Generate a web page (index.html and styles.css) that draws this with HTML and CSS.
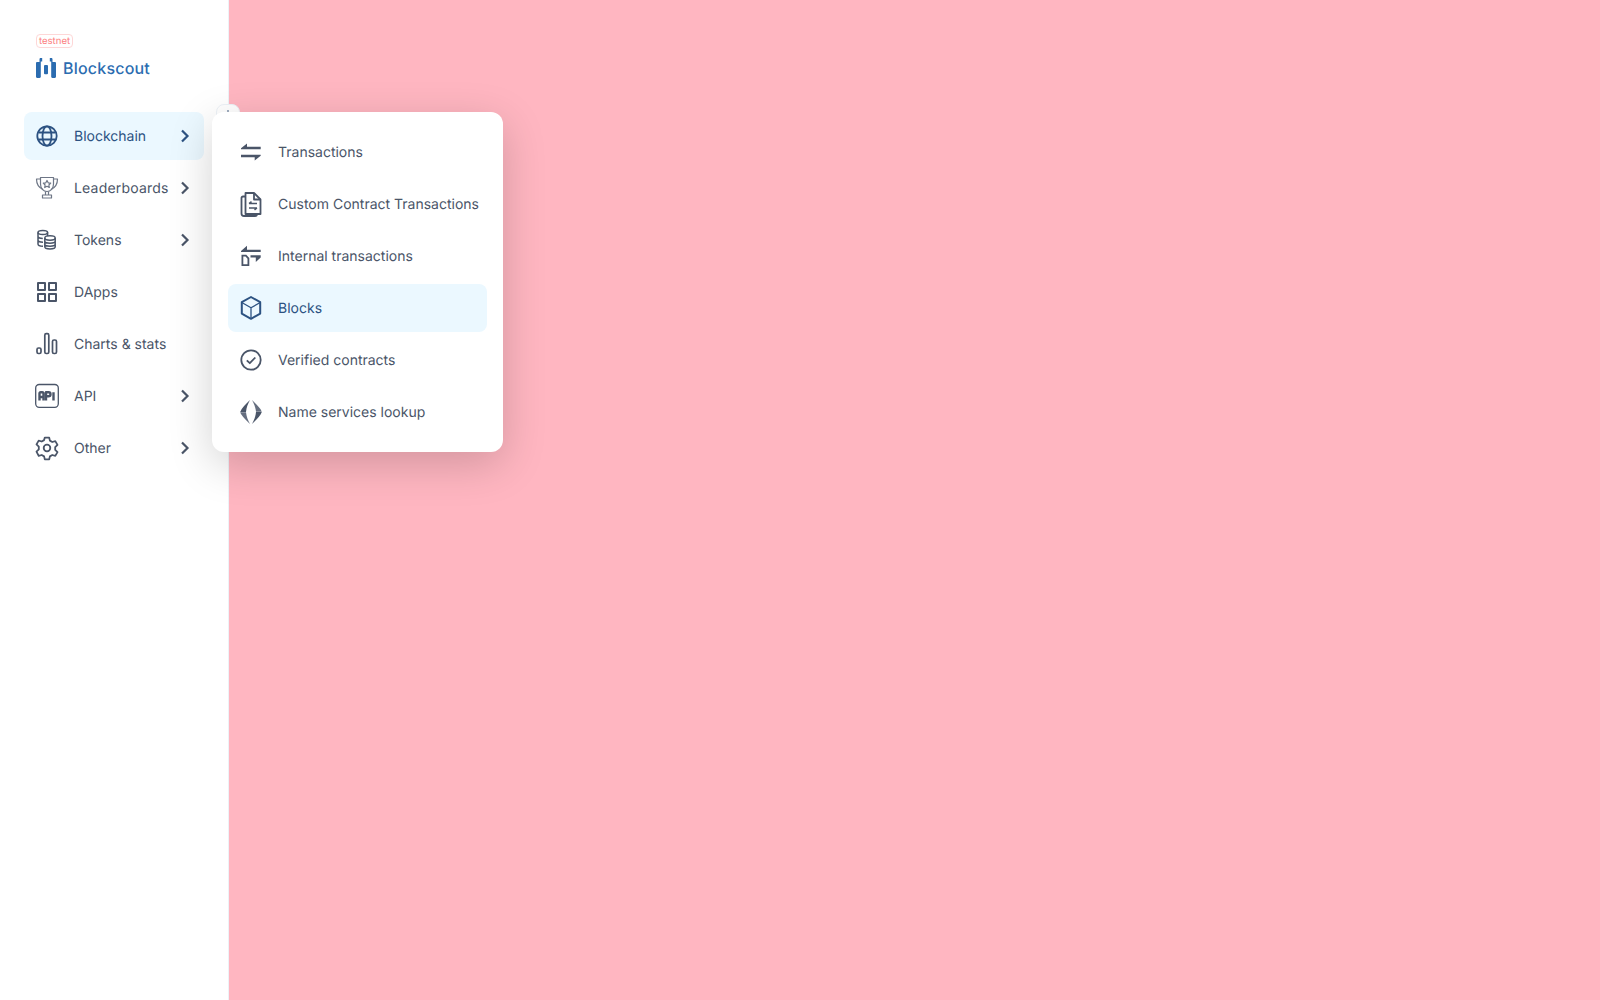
FILE: index.html
```html
<!DOCTYPE html>
<html lang="en">
<head>
  <meta charset="UTF-8">
  <meta name="viewport" content="width=device-width, initial-scale=1.0">
  <title>Blocks</title>
  <link rel="stylesheet" href="styles.css">
</head>
<body>
  <div class="page">
    <aside class="sidebar">
      <div class="brand">
        <span class="badge">testnet</span>
        <div class="logo">
          <svg class="logo-mark" viewBox="0 0 20 20" fill="#2b6cb0">
            <path d="M0 5.200c0-.7.500-1.200 1.200-1.200h2.300V1.200c0-.7.500-1.200 1.200-1.200h1.500v3.600H4.800v15.200c0 .7-.5 1.200-1.200 1.200H1.200C.5 20 0 19.500 0 18.800z"/>
            <path d="M20 5.200c0-.7-.5-1.200-1.200-1.200h-2.300V1.200c0-.7-.5-1.200-1.200-1.200h-1.500v3.600h1.400v15.200c0 .7.500 1.200 1.200 1.200h2.400c.7 0 1.200-.5 1.200-1.200z"/>
            <rect x="8" y="7" width="4" height="9.300" rx="1"/>
          </svg>
          <span class="logo-text">Blockscout</span>
        </div>
      </div>
      <nav class="nav">
        <a class="nav-item active">
          <svg class="icon globe" viewBox="0 0 30 30"><circle cx="15" cy="15" r="9.700"/><ellipse cx="15" cy="15" rx="4.500" ry="9.700"/><path d="M6.300 11.500h17.400M6.300 18.500h17.400"/></svg>
          <span class="label">Blockchain</span>
          <svg class="chevron" viewBox="0 0 20 20"><path d="M7 4.500 12.500 10 7 15.500"/></svg>
        </a>
        <a class="nav-item">
          <svg class="icon thin" viewBox="0 0 30 30"><path d="M8.500 4.500h13V11c0 4.200-2.800 7.500-6.500 7.500S8.500 15.200 8.500 11z"/><path d="M8.500 6h-4c0 5 2 8.500 6.500 10.500M21.500 6h4c0 5-2 8.500-6.500 10.500M13.500 18.500V22h3v-3.500M10.500 22h9v3h-9z"/><path d="m15 7.500 1.200 2.300 2.500.4-1.800 1.800.4 2.500-2.300-1.200-2.300 1.200.4-2.500-1.800-1.800 2.500-.4z"/></svg>
          <span class="label wide">Leaderboards</span>
          <svg class="chevron" viewBox="0 0 20 20"><path d="M7 4.500 12.500 10 7 15.500"/></svg>
        </a>
        <a class="nav-item">
          <svg class="icon coins" viewBox="0 0 30 30"><ellipse cx="10.800" cy="7.500" rx="4.800" ry="2"/><path d="M6 7.500V19c0 1.200 1.600 2.200 5 2.300M6 11.300c0 1.200 2.100 2.100 4.800 2.100M6 15.100c0 1.200 1.800 2.100 5 2.100M15.600 7.500v3.500"/><ellipse cx="18" cy="13" rx="5.200" ry="2.200"/><path d="M12.800 13v8.800c0 1.200 2.300 2.200 5.200 2.200s5.200-1 5.200-2.200V13M12.800 16c0 1.200 2.300 2.200 5.200 2.200s5.200-1 5.200-2.200M12.800 19c0 1.200 2.300 2.200 5.200 2.200s5.200-1 5.200-2.200"/></svg>
          <span class="label">Tokens</span>
          <svg class="chevron" viewBox="0 0 20 20"><path d="M7 4.500 12.500 10 7 15.500"/></svg>
        </a>
        <a class="nav-item">
          <svg class="icon" viewBox="0 0 30 30"><rect x="6" y="6" width="7" height="7"/><rect x="17" y="6" width="7" height="7"/><rect x="6" y="17" width="7" height="7"/><rect x="17" y="17" width="7" height="7"/></svg>
          <span class="label">DApps</span>
        </a>
        <a class="nav-item">
          <svg class="icon charts" viewBox="0 0 30 30"><rect x="5" y="19" width="4" height="5.500" rx="1.500"/><rect x="12.800" y="4.700" width="4" height="19.800" rx="1.500"/><rect x="20.500" y="11" width="4" height="13.500" rx="1.500"/></svg>
          <span class="label">Charts &amp; stats</span>
        </a>
        <a class="nav-item">
          <svg class="icon api-icon" viewBox="0 0 30 30"><rect x="3.700" y="3.500" width="22.600" height="22.800" rx="3.500"/><path class="api-letters" d="M7.500 19.500v-7c0-.8.500-1.300 1.300-1.300h1.400c.8 0 1.300.5 1.300 1.300v7M7.500 16h4M14 19.500v-8.300h2.600c1.200 0 1.900.7 1.900 2s-.7 2-1.900 2H14M21.500 11.200v8.300"/></svg>
          <span class="label">API</span>
          <svg class="chevron" viewBox="0 0 20 20"><path d="M7 4.500 12.500 10 7 15.500"/></svg>
        </a>
        <a class="nav-item">
          <svg class="icon gear" viewBox="0 0 30 30"><path d="m12.800 5.500h4.400l.7 3 2.400 1.400 3-.9 2.200 3.800-2.300 2.200v2.800l2.300 2.200-2.200 3.800-3-.9-2.400 1.400-.7 3h-4.400l-.7-3-2.400-1.400-3 .9L4.500 19.500l2.300-2.200v-2.800l-2.300-2.200L6.700 8.500l3 .9 2.400-1.400z" transform="translate(0 -.900)"/><circle cx="15" cy="15" r="3.300"/></svg>
          <span class="label">Other</span>
          <svg class="chevron" viewBox="0 0 20 20"><path d="M7 4.500 12.500 10 7 15.500"/></svg>
        </a>
      </nav>
      <button class="toggle" type="button"><span class="toggle-dot"></span></button>
      <div class="submenu">
        <a class="nav-item">
          <svg class="icon filled" viewBox="0 0 30 30"><path d="M5 11.200 11 6.500v3.300h13.700v2.400H5z"/><path d="M24.700 18.800 18.700 23.500v-3.300H5v-2.400h19.700z"/></svg>
          <span class="label">Transactions</span>
        </a>
        <a class="nav-item">
          <svg class="icon sheet" viewBox="0 0 30 30"><path d="M9.500 7.500V4H18l6.500 6.500v14.500h-15z"/><path d="M9.500 7.500H7c-.9 0-1.500.6-1.500 1.500v15.500c0 1.500 1 2.500 2.500 2.500h11c1.200 0 2-.8 2-2M18 4v6.500h6.500"/><path class="sheet-arrows" d="M13 14.500h8M15.500 12.700l-2.500 1.800M21 19h-8M18.500 20.800l2.500-1.800"/></svg>
          <span class="label">Custom Contract Transactions</span>
        </a>
        <a class="nav-item">
          <svg class="icon filled" viewBox="0 0 30 30"><path d="M5 10 11 4.800v3.900h13.700v2.400H5z"/><path d="M14.500 14.300h10.200v2.200L19.800 21v-4.500h-5.300z"/><path d="M5.500 13.800h4.800l3 3.200V25H5.500zm1.800 1.800v7.600h4.200v-5.400l-2-2.200z" fill-rule="evenodd"/></svg>
          <span class="label">Internal transactions</span>
        </a>
        <a class="nav-item active">
          <svg class="icon" viewBox="0 0 30 30"><path d="m15 4 9.200 5.200v11.400L15 25.800l-9.200-5.200V9.200z"/><path class="cube-lines" d="m5.800 9.500 9.200 5.300 9.200-5.300M15 14.800v11"/></svg>
          <span class="label">Blocks</span>
        </a>
        <a class="nav-item">
          <svg class="icon check" viewBox="0 0 30 30"><circle cx="15" cy="15" r="9.700"/><path d="m10.800 15.300 3 2.900 5.500-5.700"/></svg>
          <span class="label">Verified contracts</span>
        </a>
        <a class="nav-item">
          <svg class="icon filled" viewBox="0 0 30 30"><g id="ens-half"><path d="M14 3C10 7 5.500 11 4.200 15H10c.5-4.800 2-8.500 4-12z"/><path d="M14 27c-4-4-8.500-8-9.800-11.700H10c.5 4.600 2 8.200 4 11.700z" opacity=".85"/></g><use href="#ens-half" transform="rotate(180 15 15)"/></svg>
          <span class="label">Name services lookup</span>
        </a>
      </div>
    </aside>
    <main class="content"></main>
  </div>
</body>
</html>
```
FILE: styles.css
```css
* {
  box-sizing: border-box;
}
body {
  margin: 0;
  font-family: Inter, "Liberation Sans", sans-serif;
  font-size: 14px;
  color: #4a5568;
  background-color: #fff;
  text-rendering: geometricPrecision;
}
.page {
  display: flex;
  height: 1000px;
}
.sidebar {
  position: relative;
  width: 229px;
  flex-shrink: 0;
  padding: 34px 24px 0;
  background-color: #fff;
  border-right: 1px solid #edf2f7;
}
.content {
  flex: 1;
  background-color: #ffb6c1;
}
.brand {
  margin-left: 12px;
  height: 78px;
}
.badge {
  display: block;
  width: 37px;
  height: 14px;
  border: 1px solid #fed7d7;
  border-radius: 4px;
  font-size: 9.600px;
  line-height: 13px;
  text-align: center;
  color: #fc8181;
}
.logo {
  display: flex;
  align-items: center;
  gap: 7px;
  margin-top: 10px;
}
.logo-mark {
  width: 20px;
  height: 20px;
}
.logo-text {
  font-size: 16px;
  font-weight: 500;
  letter-spacing: 0.2px;
  line-height: 20px;
  color: #2b6cb0;
}
.nav {
  display: flex;
  flex-direction: column;
  gap: 4px;
}
.nav-item {
  display: flex;
  align-items: center;
  gap: 12px;
  height: 48px;
  padding: 0 8px;
  border-radius: 8px;
  color: #4a5568;
}
.nav-item.active {
  background-color: #ebf8ff;
  color: #2c5282;
}
.label {
  flex: 1;
  padding-top: 2px;
  line-height: 20px;
  white-space: nowrap;
}
.label.wide {
  letter-spacing: 0.2px;
}
.icon {
  width: 30px;
  height: 30px;
  flex-shrink: 0;
  fill: none;
  stroke: currentColor;
  stroke-width: 2;
  stroke-linejoin: round;
}
.icon.thin {
  stroke-width: 1.200;
  opacity: .8;
}
.icon.filled {
  fill: currentColor;
  stroke: none;
}
.globe, .check, .gear {
  stroke-width: 1.800;
}
.charts {
  stroke-width: 1.700;
}
.coins {
  stroke-width: 1.500;
}
.sheet {
  stroke-width: 1.800;
}
.sheet-arrows {
  stroke-width: 1.500;
}
.cube-lines {
  stroke-width: 1.300;
}
.api-icon {
  stroke-width: 1.300;
}
.api-letters {
  stroke-width: 2.400;
}
.chevron {
  width: 20px;
  height: 20px;
  flex-shrink: 0;
  margin-left: -8px;
  margin-right: 1px;
  fill: none;
  stroke: currentColor;
  stroke-width: 2.200;
}
.toggle {
  position: absolute;
  top: 104px;
  left: 216px;
  width: 24px;
  height: 24px;
  padding: 0;
  background-color: #fff;
  border: 1px solid #edf2f7;
  border-radius: 8px;
}
.toggle-dot {
  display: block;
  width: 2px;
  height: 3px;
  margin: 0 auto 10px;
  background-color: #a0aec0;
}
.submenu {
  position: absolute;
  top: 112px;
  left: 212px;
  display: flex;
  flex-direction: column;
  gap: 4px;
  width: 291px;
  padding: 16px;
  background-color: #fff;
  border-radius: 12px;
  box-shadow: 0 12px 44px rgba(0, 0, 0, 0.18);
}
```
